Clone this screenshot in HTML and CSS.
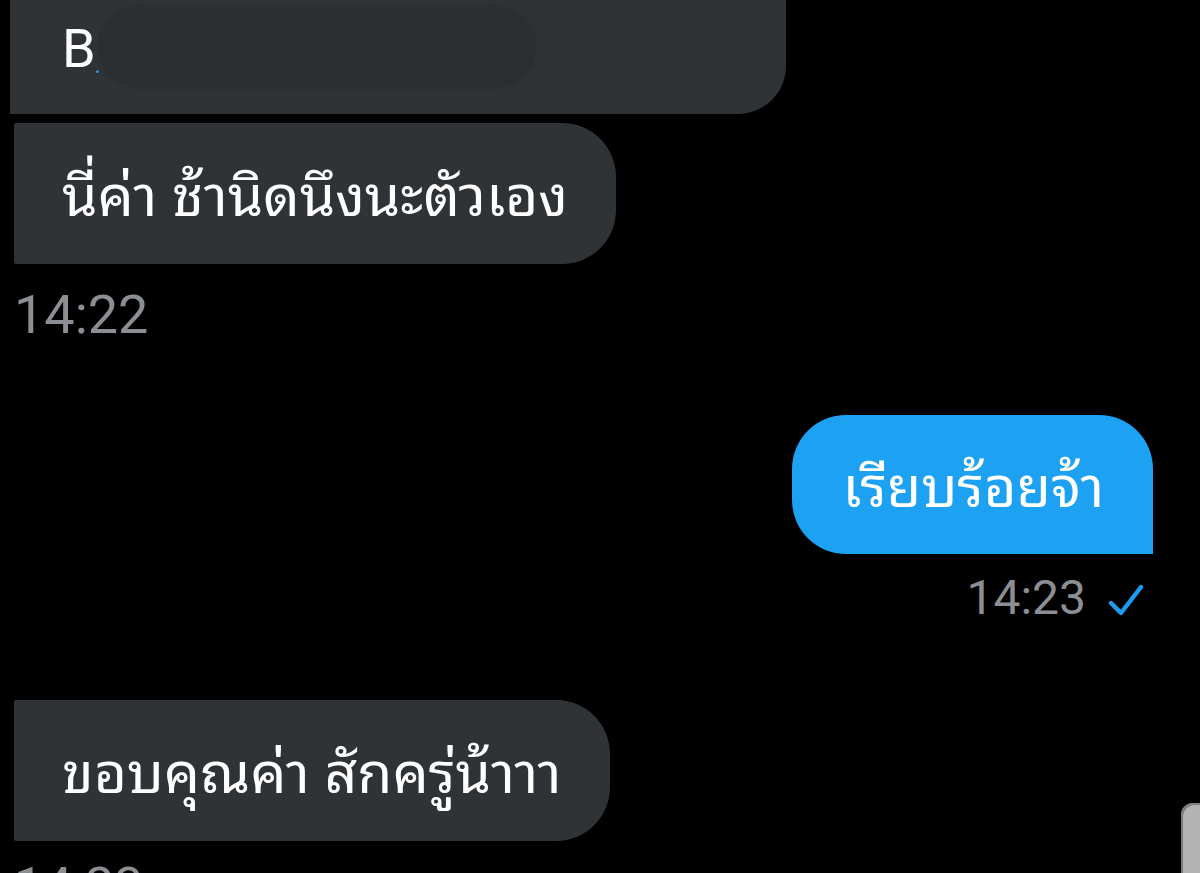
FILE: index.html
```html
<!DOCTYPE html>
<html lang="th">
<head>
<meta charset="utf-8">
<title>Chat</title>
<link rel="stylesheet" href="styles.css">
</head>
<body>
<main class="chat">
  <div class="row in">
    <div class="bubble gray first">
      <span class="latin">B</span>
      <span class="dot"></span>
      <div class="redact"></div>
    </div>
  </div>
  <div class="row in tight">
    <div class="bubble gray right-round">นี่ค่า ช้านิดนึงนะตัวเอง</div>
  </div>
  <div class="time t1">14:22</div>

  <div class="row out">
    <div class="bubble blue">เรียบร้อยจ้า</div>
  </div>
  <div class="time t2">14:23
    <svg class="check" width="36" height="34" viewBox="0 0 36 34"><polyline points="3,20 13,30 33,4" fill="none" stroke="#1d9bf0" stroke-width="4.4" stroke-linecap="round" stroke-linejoin="round"/></svg>
  </div>

  <div class="row in later">
    <div class="bubble gray right-round">ขอบคุณค่า สักครู่น้าาา</div>
  </div>
  <div class="time t3">14:23</div>
</main>
<div class="scrollbar"></div>
</body>
</html>
```

FILE: styles.css
```css
html, body {
  margin: 0;
  padding: 0;
  background: #000;
  width: 1200px;
  height: 873px;
  overflow: hidden;
}

.chat {
  display: flex;
  flex-direction: column;
  font-family: "Noto Sans Thai Looped", "Noto Serif Thai", "Noto Sans Thai", "Noto Sans", "Roboto", sans-serif;
  color: #fff;
}

.row {
  display: flex;
}

.row.in {
  padding-left: 14px;
}

.row.out {
  justify-content: flex-end;
  padding-right: 47px;
  margin-top: 73px;
}

.row.tight {
  margin-top: 9px;
}

.row.later {
  margin-top: 78px;
}

.bubble {
  display: flex;
  align-items: center;
  height: 141px;
  box-sizing: border-box;
  padding: 0 48px 6px 48px;
  font-size: 57px;
  line-height: 1;
  white-space: nowrap;
}

.gray {
  background: #2f3336;
}

.blue {
  background: #1da1f2;
  border-radius: 54px 54px 0 54px;
  height: 139px;
  padding: 0 49px 6px 50px;
  font-size: 56px;
}

.right-round {
  border-radius: 2px 54px 54px 2px;
}

.first {
  position: relative;
  width: 776px;
  height: 114px;
  margin-left: -4px;
  padding-left: 52px;
  padding-bottom: 0;
  align-items: flex-start;
  padding-top: 22px;
  border-radius: 0 0 48px 0;
}

.latin {
  font-family: "Roboto", "Noto Sans", sans-serif;
  font-size: 54px;
  line-height: 54px;
}

.dot {
  position: absolute;
  left: 86px;
  top: 70px;
  width: 3px;
  height: 3px;
  border-radius: 50%;
  background: #2a8fd6;
}

.redact {
  position: absolute;
  left: 87px;
  top: 5px;
  width: 440px;
  height: 84px;
  border-radius: 42px;
  background: #2b2f32;
}

.time {
  font-family: "Roboto", "Noto Sans", sans-serif;
  color: #8b8f94;
  line-height: 1;
}

.t1 {
  font-size: 54px;
  padding-left: 14px;
  margin-top: 24px;
}

.t2 {
  display: flex;
  align-items: center;
  justify-content: flex-end;
  gap: 22px;
  font-size: 48px;
  padding-right: 56px;
  margin-top: 20px;
}

.check {
  margin-top: 4px;
}

.t3 {
  font-size: 52px;
  padding-left: 14px;
  margin-top: 20px;
}

.scrollbar {
  position: absolute;
  left: 1181px;
  top: 803px;
  width: 19px;
  height: 80px;
  background: #b3b3b3;
  border-radius: 12px 0 0 0;
  box-shadow: inset 2px 2px 0 #7d7d7d;
}
```
